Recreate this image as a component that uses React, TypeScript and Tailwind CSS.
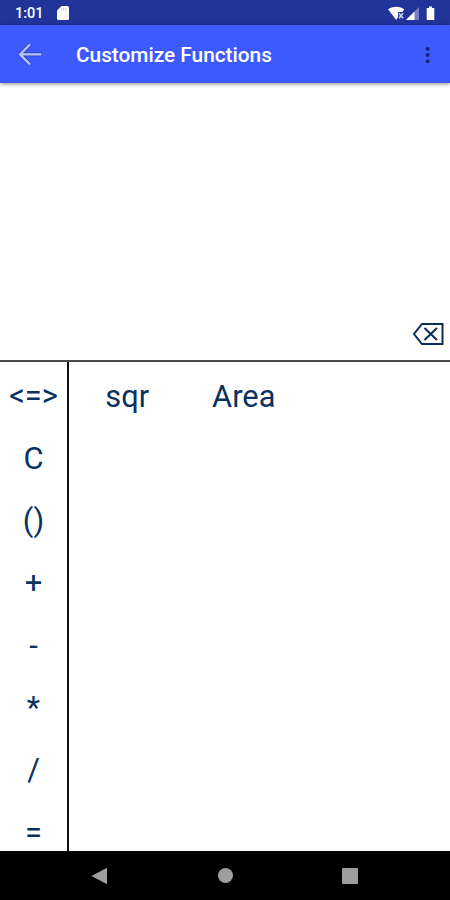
import React from 'react';

const KEYS = ['<=>', 'C', '()', '+', '-', '*', '/', '='];
const FUNCTIONS = ['sqr', 'Area'];

const StatusBar: React.FC = () => (
	<div className="flex h-[25px] shrink-0 items-center bg-[#21349a] pl-[15px] pr-[14px] text-white">
		<span className="pt-[3px] text-[14.5px] leading-none font-medium">1:01</span>
		<svg className="mt-px ml-[13px]" width="12" height="14" viewBox="0 0 12 14">
			<path d="M4.5 0H10.5Q12 0 12 1.5V12.5Q12 14 10.5 14H1.5Q0 14 0 12.5V4.5Z" fill="#fff" />
			<path d="M4.3 2.3V4.6M6.5 2V4.6M8.7 2V4.6" stroke="#c3c9ea" strokeWidth="1" />
		</svg>
		<svg className="mt-px ml-auto" width="48" height="16" viewBox="0 0 48 16">
			{/* wifi */}
			<path d="M0 4.3C4.5.8 12 .8 16.3 4.3L14.3 7H10V12L8.2 15Z" fill="#fff" />
			<path d="M11 8.2L15 13.2M15 8.2L11 13.2" stroke="#c9cfee" strokeWidth="1.6" />
			{/* signal */}
			<path d="M31 2V15H18Z" fill="#7480bf" />
			<path d="M26.5 6.5V15H18Z" fill="#fff" />
			{/* battery */}
			<path d="M41 1.5H44V3H46.3V15H38.7V3H41Z" fill="#fff" />
		</svg>
	</div>
);

const AppBar: React.FC = () => (
	<header className="relative flex h-[58px] shrink-0 items-center bg-[#3d5afe] pr-[18px] pl-[18px] shadow-[0_1px_4px_rgba(0,0,0,0.45)]">
		<svg width="24" height="24" viewBox="0 0 24 24" fill="none">
			<path d="M23.5 12.4H2M12 2.4L2 12.4L12 22.4" stroke="#2a40b4" strokeWidth="3.8" />
			<path d="M23.2 12.4H2M12 2.4L2 12.4L12 22.4" stroke="#bcc4fa" strokeWidth="2.2" />
		</svg>
		<h1 className="ml-[34px] pt-[3px] text-[20.8px] leading-none font-medium whitespace-nowrap text-white">
			Customize Functions
		</h1>
		<svg className="mt-px ml-auto" width="8" height="20" viewBox="0 0 8 20" fill="#152071">
			<circle cx="3.6" cy="3.8" r="1.9" />
			<circle cx="3.6" cy="10" r="1.9" />
			<circle cx="3.6" cy="16.3" r="1.9" />
		</svg>
	</header>
);

const NavBar: React.FC = () => (
	<nav className="flex h-[49px] shrink-0 items-center justify-between bg-black pr-[92px] pl-[91px]">
		<svg width="17" height="18" viewBox="0 0 17 18">
			<path d="M.5 9L16 .7V17.3Z" fill="#9e9e9e" />
		</svg>
		<div className="h-[15px] w-[15px] rounded-full bg-[#9e9e9e]" />
		<div className="h-4 w-4 rounded-[1px] bg-[#9e9e9e]" />
	</nav>
);

export default function App() {
	return (
		<div className="flex h-[900px] w-[450px] flex-col overflow-hidden bg-white font-[Roboto,sans-serif]">
			<StatusBar />
			<AppBar />
			<section className="flex h-[277px] shrink-0 items-end justify-end pr-[6px] pb-[14px]">
				<svg width="32" height="24" viewBox="0 0 32 24" fill="none" stroke="#0b2d58" strokeWidth="2">
					<path d="M10 2H30.5V22H10L2 12Z" />
					<path d="M12.5 6L25 18M25 6L12.5 18" />
				</svg>
			</section>
			<main className="flex min-h-0 flex-1 overflow-hidden border-t-2 border-[#4b4b4b] text-[30.8px] leading-none text-[#0b325f]">
				<div className="flex w-[69px] shrink-0 flex-col border-r-2 border-[#111] pt-[3.6px]">
					{KEYS.map((key) => (
						<button key={key} className="flex h-[62.35px] shrink-0 items-center justify-center">
							{key}
						</button>
					))}
				</div>
				<div className="flex pt-1">
					{FUNCTIONS.map((name) => (
						<button key={name} className="flex h-[62.35px] w-[116.5px] items-center justify-center">
							{name}
						</button>
					))}
				</div>
			</main>
			<NavBar />
		</div>
	);
}
